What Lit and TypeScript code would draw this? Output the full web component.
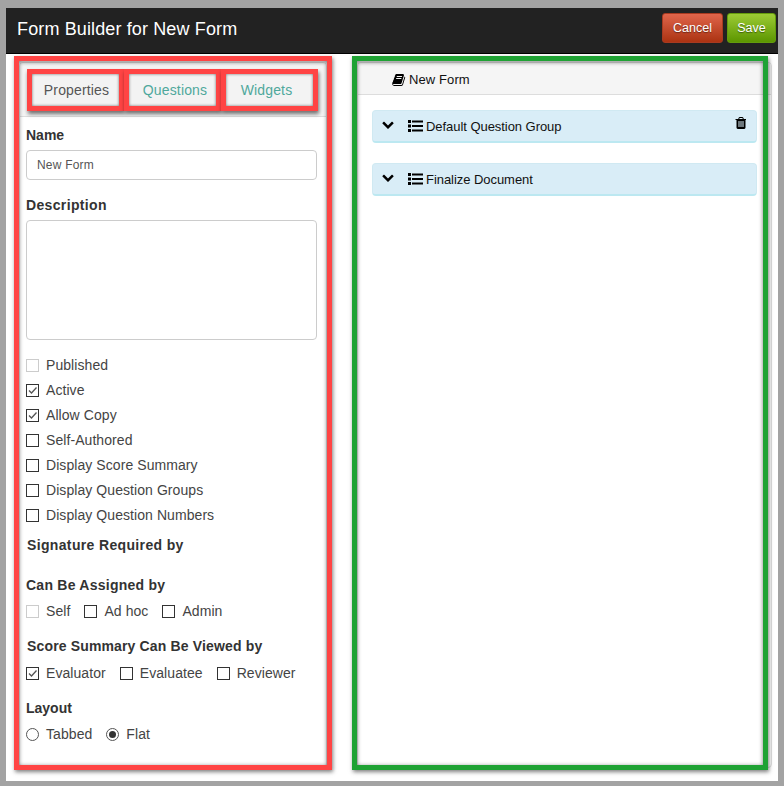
import { LitElement, html, css, svg } from "lit";
import { customElement } from "lit/decorators.js";

const chevron = html`<svg class="chev" viewBox="100 300 1592 1280"><path d="M1683 808l-742 741q-19 19-45 19t-45-19l-742-741q-19-19-19-45.5t19-45.5l166-165q19-19 45-19t45 19l531 531 531-531q19-19 45-19t45 19l166 165q19 19 19 45.5t-19 45.5z"/></svg>`;
const list = html`<svg class="list" viewBox="0 0 15 12">${[0, 4.5, 9].map(
  (y) => svg`<rect x="0" y="${y}" width="3" height="3"/><rect x="4" y="${y + 0.5}" width="11" height="2"/>`
)}</svg>`;
const book = html`<svg class="book" viewBox="60 130 1620 1540"><path d="M1639 478q40 57 18 129l-275 906q-19 64-76.5 107.5t-122.5 43.5h-923q-77 0-148.5-53.5t-99.5-131.5q-24-67-2-127 0-4 3-27t4-37q1-8-3-21.5t-3-19.5q2-11 8-21t16.5-23.5 16.5-23.5q23-38 45-91.5t30-91.5q3-10 .5-30t-.5-28q3-11 17-28t17-23q21-36 42-92t25-90q1-9-2.5-32t.5-28q4-13 22-30.5t22-22.5q19-26 42.5-84.5t27.5-96.5q1-8-3-25.5t-2-26.5q2-8 9-18t18-23 17-21q8-12 16.5-30.5t15-35 16-36 19.5-32 26.5-23.5 36-11.5 47.5 5.5l-1 3q38-9 51-9h761q74 0 114 56t18 130l-274 906q-36 119-71.5 153.5t-128.5 34.5h-869q-27 0-38 15-11 16-1 43 24 70 144 70h923q29 0 56-15.5t35-41.5l300-987q7-22 5-57 38 15 59 43zm-1064 2q-4 13 2 22.5t20 9.5h608q13 0 25.5-9.5t16.5-22.5l21-64q4-13-2-22.5t-20-9.5h-608q-13 0-25.5 9.5t-16.5 22.5zm-83 256q-4 13 2 22.5t20 9.5h608q13 0 25.5-9.5t16.5-22.5l21-64q4-13-2-22.5t-20-9.5h-608q-13 0-25.5 9.5t-16.5 22.5z"/></svg>`;
const trash = html`<svg class="trash" viewBox="128 128 1408 1536"><path d="M704 1376v-704q0-14-9-23t-23-9h-64q-14 0-23 9t-9 23v704q0 14 9 23t23 9h64q14 0 23-9t9-23zm256 0v-704q0-14-9-23t-23-9h-64q-14 0-23 9t-9 23v704q0 14 9 23t23 9h64q14 0 23-9t9-23zm256 0v-704q0-14-9-23t-23-9h-64q-14 0-23 9t-9 23v704q0 14 9 23t23 9h64q14 0 23-9t9-23zm-544-992h448l-48-117q-7-9-17-11h-317q-10 2-17 11zm928 32v64q0 14-9 23t-23 9h-96v948q0 83-47 143.5t-113 60.5h-832q-66 0-113-58.5t-47-141.5v-952h-96q-14 0-23-9t-9-23v-64q0-14 9-23t23-9h309l70-167q15-37 54-63t79-26h320q40 0 79 26t54 63l70 167h309q14 0 23 9t9 23z"/></svg>`;

type Opt = { label: string; on?: boolean; off?: boolean };

function check(o: Opt) {
  return html`<label class="opt"><span class="box ${o.off ? "dis" : ""}">${o.on
    ? html`<svg viewBox="0 0 11 11"><path d="M2 5.5 4.5 8 9.5 2.5" fill="none" stroke="#555" stroke-width="1.3"/></svg>`
    : ""}</span><span class="t">${o.label}</span></label>`;
}
function radio(o: Opt) {
  return html`<label class="opt"><span class="radio ${o.on ? "sel" : ""}"></span><span class="t">${o.label}</span></label>`;
}

@customElement("app-root")
export class AppRoot extends LitElement {
  static styles = css`
    :host {
      display: block;
      width: 784px;
      height: 786px;
      background: #a3a3a3;
      padding: 8px 6px 5px;
      box-sizing: border-box;
      overflow: hidden;
      font-family: "Liberation Sans", Arial, sans-serif;
      font-size: 14px;
      color: #333;
    }
    .modal {
      position: relative;
      height: 773px;
      background: #fff;
    }
    .head {
      height: 46px;
      box-sizing: border-box;
      background: #222;
      border-bottom: 1px solid #000;
      display: flex;
      align-items: flex-start;
      padding: 5px 2px 0 11px;
      gap: 4px;
    }
    .title {
      flex: 1;
      color: #fff;
      font-size: 18px;
      letter-spacing: 0.13px;
      line-height: 30px;
      margin-top: 1px;
    }
    .btn {
      height: 30px;
      box-sizing: border-box;
      border-radius: 3px;
      color: #fff;
      font-size: 12.5px;
      display: flex;
      align-items: center;
      justify-content: center;
      text-shadow: 0 1px 1px rgba(0, 0, 0, 0.45);
    }
    .cancel {
      width: 61px;
      background: linear-gradient(#e0654b, #ab3312);
      border: 1px solid #a83a20;
    }
    .save {
      width: 49px;
      background: linear-gradient(#9ccb35, #5c9600);
      border: 1px solid #649c0c;
    }
    .cols {
      display: grid;
      grid-template-columns: 308px 415px;
      gap: 30px;
      padding: 8px 0 0 13px;
    }
    .panel {
      height: 706px;
      box-sizing: border-box;
      background: #fff;
      border: 1px solid #ddd;
      border-radius: 4px;
      overflow: hidden;
    }
    .tabs {
      height: 54px;
      box-sizing: border-box;
      background: #f5f5f5;
      border-bottom: 1px solid #ddd;
      display: flex;
      padding: 6px 0 0 7px;
    }
    .tab {
      width: 97px;
      height: 42px;
      box-sizing: border-box;
      border: 5px solid #ff4444;
      background: #f3f3f3;
      display: flex;
      align-items: center;
      justify-content: center;
      color: #4fa89c;
      letter-spacing: 0.15px;
      box-shadow: 1px 3px 4px rgba(0, 0, 0, 0.55), inset 0 0 3px rgba(0, 0, 0, 0.55);
    }
    .tab.active {
      color: #555;
      padding-left: 2px;
    }
    .tab.mid {
      padding-left: 5px;
    }
    .tab.last {
      padding-right: 6px;
    }
    .form {
      padding-left: 6px;
    }
    .lbl {
      font-weight: bold;
      line-height: 20px;
      height: 20px;
    }
    .i {
      margin-left: 1px;
    }
    .name {
      margin-top: 8px;
    }
    .desc {
      margin-top: 15px;
      letter-spacing: 0.35px;
    }
    .sig {
      margin-top: 7px;
      letter-spacing: 0.35px;
    }
    .assign {
      margin-top: 20px;
      letter-spacing: 0.25px;
    }
    .score {
      margin-top: 12px;
      letter-spacing: 0.15px;
    }
    .layout {
      margin-top: 12px;
    }
    .input {
      margin-top: 5px;
      width: 291px;
      box-sizing: border-box;
      border: 1px solid #ccc;
      border-radius: 4px;
      background: #fff;
      color: #555;
      font-size: 12px;
      letter-spacing: 0.2px;
      padding-left: 10px;
      display: flex;
      align-items: center;
      height: 30px;
    }
    .area {
      margin-top: 5px;
      width: 291px;
      height: 120px;
      box-sizing: border-box;
      border: 1px solid #ccc;
      border-radius: 4px;
    }
    .stack {
      margin-top: 13px;
    }
    .opt {
      display: flex;
      align-items: center;
      gap: 7px;
      height: 25px;
      white-space: nowrap;
      color: #444;
      letter-spacing: 0.07px;
    }
    .t {
      margin-bottom: 2px;
    }
    .row {
      display: flex;
      gap: 14px;
      margin-top: 4px;
    }
    .row.tight {
      margin-top: 5px;
    }
    .box,
    .radio {
      width: 13px;
      height: 13px;
      box-sizing: border-box;
      flex: none;
      border: 1px solid #333;
      display: block;
    }
    .box svg {
      display: block;
      width: 11px;
      height: 11px;
    }
    .box.dis {
      border-color: #ccc;
    }
    .radio {
      border-radius: 50%;
      border-color: #555;
      padding: 2px;
    }
    .radio.sel::after {
      content: "";
      display: block;
      width: 7px;
      height: 7px;
      border-radius: 50%;
      background: #333;
    }
    .crumb {
      height: 32px;
      box-sizing: border-box;
      background: #f5f5f5;
      border-bottom: 1px solid #ddd;
      display: flex;
      align-items: center;
      gap: 3px;
      padding: 2px 0 0 34px;
      font-size: 13px;
      letter-spacing: 0.1px;
      color: #111;
    }
    svg {
      fill: #000;
      flex: none;
    }
    .book {
      width: 14px;
      height: 12px;
    }
    .groups {
      display: flex;
      flex-direction: column;
      gap: 20px;
      padding: 15px 14px 0;
    }
    .group {
      height: 33px;
      box-sizing: border-box;
      background: #d9edf7;
      border: 1px solid #d0e9f2;
      border-bottom: 2px solid #bce8f1;
      border-radius: 4px;
      display: flex;
      align-items: center;
      padding: 0 10px 0 8px;
      font-size: 13px;
      letter-spacing: -0.05px;
      color: #111;
    }
    .chev {
      width: 14px;
      height: 9px;
      margin-top: -3px;
    }
    .list {
      width: 15px;
      height: 12px;
      margin-left: 13px;
      margin-right: 3px;
    }
    .trash {
      width: 11px;
      height: 12px;
      margin-left: auto;
      align-self: flex-start;
      margin-top: 6px;
    }
    .mark {
      position: absolute;
      top: 48px;
      height: 714px;
      box-sizing: border-box;
      border: 5px solid;
      pointer-events: none;
      box-shadow: 1px 2px 4px rgba(0, 0, 0, 0.5), inset 0 1px 4px rgba(0, 0, 0, 0.55);
    }
    .mark.red {
      left: 8px;
      width: 318px;
      border-color: #ff4444;
    }
    .mark.green {
      left: 346px;
      width: 416px;
      border-color: #1fa234;
    }
  `;

  render() {
    return html`
      <div class="modal">
        <div class="head">
          <div class="title">Form Builder for New Form</div>
          <div class="btn cancel">Cancel</div>
          <div class="btn save">Save</div>
        </div>
        <div class="cols">
          <section class="panel">
            <div class="tabs">
              <div class="tab active">Properties</div>
              <div class="tab mid">Questions</div>
              <div class="tab last">Widgets</div>
            </div>
            <div class="form">
              <div class="lbl name">Name</div>
              <div class="input">New Form</div>
              <div class="lbl desc">Description</div>
              <div class="area"></div>
              <div class="stack">
                ${[
                  { label: "Published", off: true },
                  { label: "Active", on: true },
                  { label: "Allow Copy", on: true },
                  { label: "Self-Authored" },
                  { label: "Display Score Summary" },
                  { label: "Display Question Groups" },
                  { label: "Display Question Numbers" },
                ].map(check)}
              </div>
              <div class="lbl i sig">Signature Required by</div>
              <div class="lbl assign">Can Be Assigned by</div>
              <div class="row">
                ${[{ label: "Self", off: true }, { label: "Ad hoc" }, { label: "Admin" }].map(check)}
              </div>
              <div class="lbl i score">Score Summary Can Be Viewed by</div>
              <div class="row tight">
                ${[{ label: "Evaluator", on: true }, { label: "Evaluatee" }, { label: "Reviewer" }].map(check)}
              </div>
              <div class="lbl layout">Layout</div>
              <div class="row">
                ${[{ label: "Tabbed" }, { label: "Flat", on: true }].map(radio)}
              </div>
            </div>
          </section>
          <section class="panel">
            <div class="crumb">${book}<span>New Form</span></div>
            <div class="groups">
              <div class="group">${chevron}${list}<span>Default Question Group</span>${trash}</div>
              <div class="group">${chevron}${list}<span>Finalize Document</span></div>
            </div>
          </section>
        </div>
        <div class="mark red"></div>
        <div class="mark green"></div>
      </div>
    `;
  }
}
